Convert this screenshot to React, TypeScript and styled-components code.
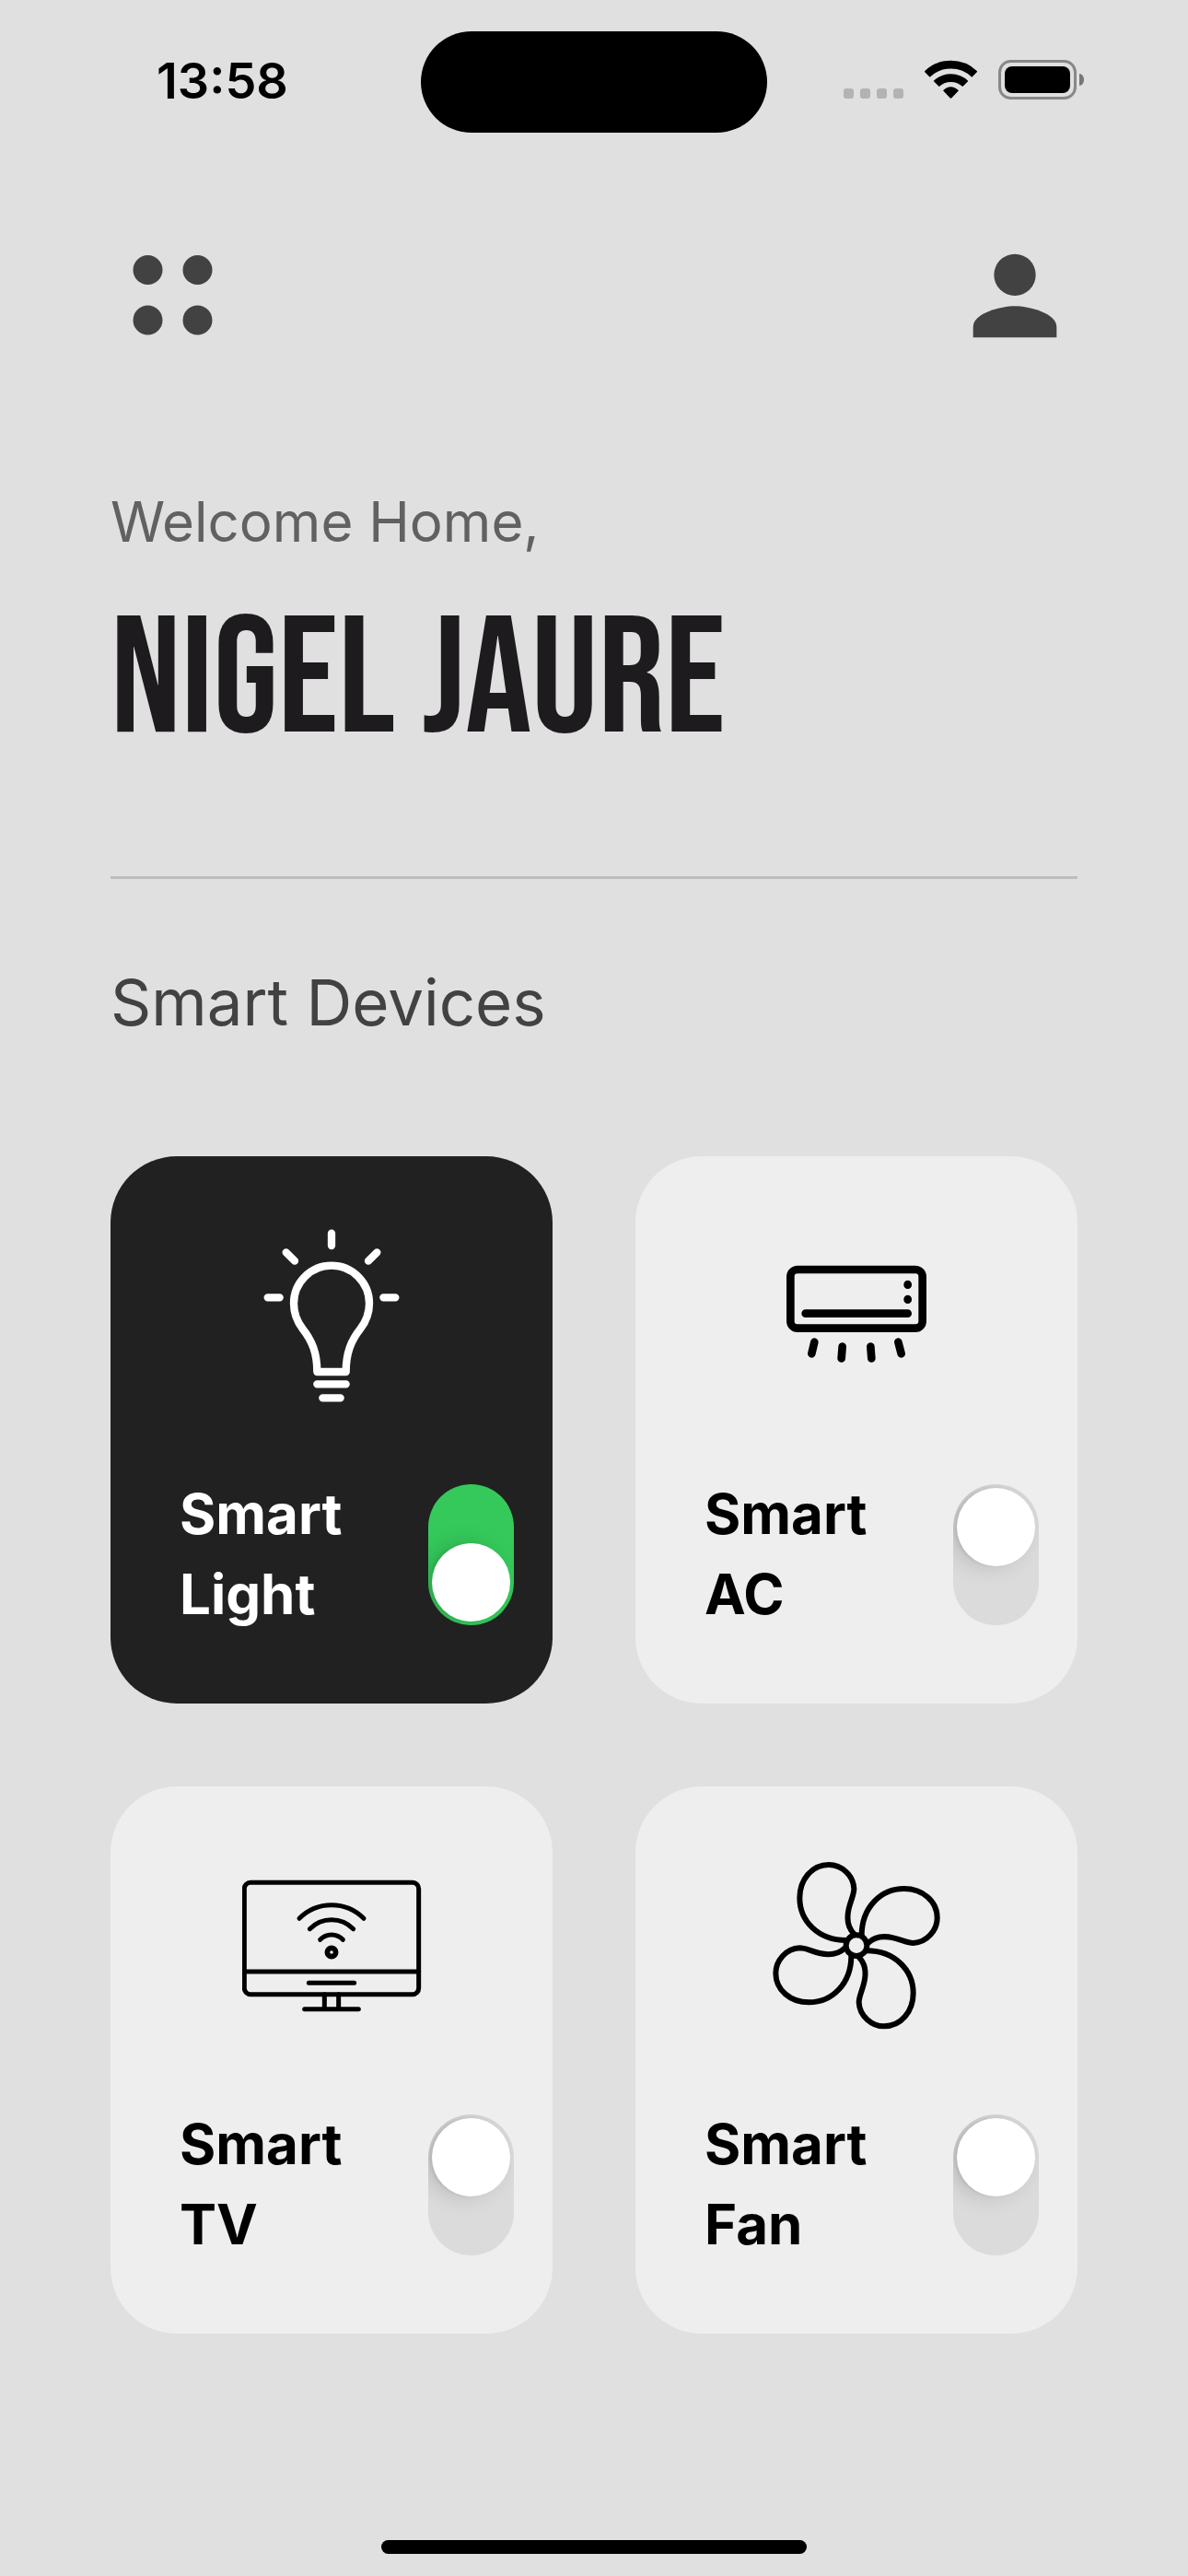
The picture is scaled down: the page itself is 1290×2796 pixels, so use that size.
import React, { useState } from "react";
import styled, { createGlobalStyle } from "styled-components";

const GlobalStyle = createGlobalStyle`
  *, *::before { box-sizing: border-box; }
  body {
    margin: 0;
    background: #e0e0e0;
    font-family: Inter, "Liberation Sans", sans-serif;
  }
  h1, h2, p { margin: 0; font-weight: 400; }
`;

const Screen = styled.div`
  display: flex;
  flex-direction: column;
  min-height: 100vh;
`;

const StatusBar = styled.div`
  display: grid;
  grid-template-columns: 1fr 376px 1fr;
  align-items: center;
  padding-top: 34px;
`;

const Clock = styled.time`
  padding: 0 0 2px 170px;
  font-size: 54px;
  line-height: 60px;
  font-weight: 600;
  color: #000;
`;

const Island = styled.div`
  height: 110px;
  border-radius: 55px;
  background: #000;
`;

const StatusIcons = styled.div`
  display: flex;
  justify-content: flex-end;
  align-items: center;
  gap: 23px;
  padding: 0 113px 5px 0;

  svg { display: block; }
`;

const TopBar = styled.header`
  display: flex;
  justify-content: space-between;
  padding: 109px 120px 0;
`;

const IconButton = styled.button`
  width: 136px;
  height: 136px;
  padding: 0;
  border: 0;
  background: none;
  color: #424242;
  cursor: pointer;

  svg { display: block; width: 100%; height: 100%; }
`;

const Main = styled.main`
  padding: 141px 120px 0;
`;

const Greeting = styled.p`
  font-size: 60px;
  line-height: 72px;
  color: #616161;
`;

const UserName = styled.h1`
  font-family: "Bebas Neue", "Liberation Sans Narrow", "Liberation Sans", sans-serif;
  font-size: 180px;
  line-height: 276px;
  white-space: nowrap;
  color: #1d1b1e;
`;

const Divider = styled.hr`
  height: 3px;
  margin: 73px 0 92px;
  border: 0;
  background: #bdbdbd;
`;

const SectionTitle = styled.h2`
  font-size: 69px;
  line-height: 84px;
  color: #424242;
`;

const DeviceGrid = styled.div`
  display: grid;
  grid-template-columns: 1fr 1fr;
  gap: 90px;
  margin-top: 125px;
`;

const Card = styled.section<{ $on: boolean }>`
  display: flex;
  flex-direction: column;
  gap: 75px;
  padding: 75px 42px 75px 75px;
  border-radius: 72px;
  background: ${(p) => (p.$on ? "#212121" : "#eeeeee")};
  color: ${(p) => (p.$on ? "#fff" : "#000")};
`;

const DeviceIcon = styled.svg`
  display: block;
  align-self: center;
  width: 195px;
  height: 195px;
  margin-right: 33px;
  fill: none;
  stroke: currentColor;
  stroke-linecap: round;
  stroke-linejoin: round;
`;

const CardFooter = styled.div`
  display: flex;
  align-items: center;
  justify-content: space-between;
`;

const DeviceName = styled.label`
  max-width: 240px;
  font-size: 60px;
  line-height: 87px;
  font-weight: 700;
`;

const Toggle = styled.input`
  appearance: none;
  flex: none;
  display: flex;
  align-items: flex-start;
  width: 93px;
  height: 153px;
  margin: 0;
  padding: 4px;
  border-radius: 47px;
  background: #dbdbdb;
  overflow: hidden;
  cursor: pointer;

  &::before {
    content: "";
    width: 85px;
    height: 85px;
    border-radius: 50%;
    background: #fff;
    box-shadow: -9px 0 24px rgba(0, 0, 0, 0.15), -3px 0 3px rgba(0, 0, 0, 0.06);
  }

  &:checked {
    align-items: flex-end;
    background: #35c95b;
  }
`;

const HomeIndicator = styled.div`
  width: 462px;
  height: 15px;
  margin: auto auto 24px;
  border-radius: 8px;
  background: #000;
`;

const BulbIcon = () => (
  <DeviceIcon viewBox="9 60 585 585" strokeWidth="25" aria-hidden="true">
    <path d="M300 86V126M92 295H131M469 295H508M152 148L180 176M448 148L420 176" />
    <path d="M253 537C253 475 236 435 206 397C187 372 177 348 177 314A123 123 0 0 1 423 314C423 348 413 372 394 397C364 435 347 475 347 537Z" />
    <path d="M253 577H347M271 622H329" />
  </DeviceIcon>
);

const AirConditionerIcon = () => (
  <DeviceIcon viewBox="39 -30 585 585" strokeWidth="26" aria-hidden="true">
    <rect x="115" y="114" width="430" height="191" rx="23" />
    <path d="M164 257H497M497 162V164M497 210V212" />
    <path d="M193 350L184 388M284 365L281 403M376 365L379 403M466 350L476 388" />
  </DeviceIcon>
);

const TvIcon = () => (
  <DeviceIcon viewBox="69 -18 585 585" strokeWidth="15" aria-hidden="true">
    <rect x="76" y="70" width="568" height="364" rx="20" />
    <path d="M76 360H644M286 397H434M337 434V482M383 434V482M272 482H448" />
    <circle cx="360" cy="297" r="14" strokeWidth="17" />
    <path d="M323 256A51 51 0 0 1 397 256M289 221A99 99 0 0 1 431 221M255 187A148 148 0 0 1 465 187" />
  </DeviceIcon>
);

const FanIcon = () => (
  <DeviceIcon viewBox="39 42 585 585" strokeWidth="18" aria-hidden="true">
    <circle cx="330" cy="335" r="34" />
    {[0, 90, 180, 270].map((angle) => (
      <path
        key={angle}
        transform={`rotate(${angle} 330 335)`}
        d="M322 297C300 275 298 245 305 215C312 185 322 170 322 150C320 105 280 72 240 72C185 72 145 120 145 180C145 255 205 318 297 318"
      />
    ))}
  </DeviceIcon>
);

const initialDevices = [
  { id: "light", name: "Smart Light", Icon: BulbIcon, on: true },
  { id: "ac", name: "Smart AC", Icon: AirConditionerIcon, on: false },
  { id: "tv", name: "Smart TV", Icon: TvIcon, on: false },
  { id: "fan", name: "Smart Fan", Icon: FanIcon, on: false },
];

export default function App() {
  const [devices, setDevices] = useState(initialDevices);

  const toggle = (id: string) =>
    setDevices((list) => list.map((d) => (d.id === id ? { ...d, on: !d.on } : d)));

  return (
    <Screen>
      <GlobalStyle />
      <StatusBar>
        <Clock>13:58</Clock>
        <Island />
        <StatusIcons>
          <svg width="65" height="43" viewBox="0 0 65 43" fill="#b3b3b3" aria-hidden="true">
            {[0, 18, 36, 54].map((x) => (
              <rect key={x} x={x} y="31" width="11" height="11" rx="3" />
            ))}
          </svg>
          <svg width="57" height="43" viewBox="0 0 171 129" aria-hidden="true">
            <path d="M8 47A111 111 0 0 1 163 47" fill="none" stroke="#000" strokeWidth="26" />
            <path d="M38 78A68 68 0 0 1 133 78" fill="none" stroke="#000" strokeWidth="26" />
            <path d="M60 100Q85 76 111 100L89 123Q85.500 127 82 123Z" />
          </svg>
          <svg width="93" height="43" viewBox="0 0 93 43" aria-hidden="true">
            <rect x="1.500" y="1.500" width="82" height="40" rx="12" fill="none" stroke="#888" strokeWidth="3" />
            <rect x="7" y="7" width="71" height="29" rx="8" />
            <path d="M88 15C91 15 93 18 93 21.500S91 28 88 28Z" fill="#777" />
          </svg>
        </StatusIcons>
      </StatusBar>

      <TopBar>
        <IconButton type="button" aria-label="Menu">
          <svg viewBox="0 0 136 136" fill="currentColor">
            <circle cx="40.500" cy="40" r="16" />
            <circle cx="94.500" cy="40" r="16" />
            <circle cx="40.500" cy="94.500" r="16" />
            <circle cx="94.500" cy="94.500" r="16" />
          </svg>
        </IconButton>
        <IconButton type="button" aria-label="Profile">
          <svg viewBox="0 0 24 24" fill="currentColor">
            <circle cx="12" cy="8" r="4" />
            <path d="M12 14c-2.670 0-8 1.340-8 4v2h16v-2c0-2.660-5.330-4-8-4z" />
          </svg>
        </IconButton>
      </TopBar>

      <Main>
        <Greeting>Welcome Home,</Greeting>
        <UserName>NIGEL JAURE</UserName>
        <Divider />
        <SectionTitle>Smart Devices</SectionTitle>
        <DeviceGrid>
          {devices.map(({ id, name, Icon, on }) => (
            <Card key={id} $on={on}>
              <Icon />
              <CardFooter>
                <DeviceName htmlFor={id}>{name}</DeviceName>
                <Toggle id={id} type="checkbox" role="switch" checked={on} onChange={() => toggle(id)} />
              </CardFooter>
            </Card>
          ))}
        </DeviceGrid>
      </Main>

      <HomeIndicator />
    </Screen>
  );
}
